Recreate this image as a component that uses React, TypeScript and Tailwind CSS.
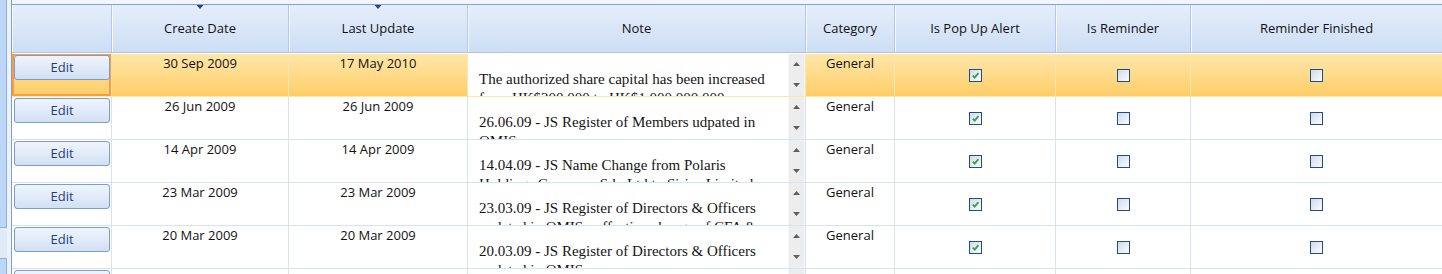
import React from "react";

type Note = {
  created: string;
  updated: string;
  note: string;
  category: string;
  popup: boolean;
  reminder: boolean;
  finished: boolean;
};

const notes: Note[] = [
  {
    created: "30 Sep 2009",
    updated: "17 May 2010",
    note: "The authorized share capital has been increased from HK$200,000 to HK$1,000,000,000",
    category: "General",
    popup: true,
    reminder: false,
    finished: false,
  },
  {
    created: "26 Jun 2009",
    updated: "26 Jun 2009",
    note: "26.06.09 - JS Register of Members udpated in OMIS",
    category: "General",
    popup: true,
    reminder: false,
    finished: false,
  },
  {
    created: "14 Apr 2009",
    updated: "14 Apr 2009",
    note: "14.04.09 - JS Name Change from Polaris Holdings Company Sdn Ltd to Sirius Limited",
    category: "General",
    popup: true,
    reminder: false,
    finished: false,
  },
  {
    created: "23 Mar 2009",
    updated: "23 Mar 2009",
    note: "23.03.09 - JS Register of Directors & Officers updated in OMIS - effective change of CFA & RO",
    category: "General",
    popup: true,
    reminder: false,
    finished: false,
  },
  {
    created: "20 Mar 2009",
    updated: "20 Mar 2009",
    note: "20.03.09 - JS Register of Directors & Officers updated in OMIS",
    category: "General",
    popup: true,
    reminder: false,
    finished: false,
  },
  {
    created: "",
    updated: "",
    note: "",
    category: "",
    popup: false,
    reminder: false,
    finished: false,
  },
];

const cols = "grid grid-cols-[100px_177px_179px_338px_89px_161px_135px_1fr]";

function HeaderCell({ label, sorted }: { label?: string; sorted?: boolean }) {
  return (
    <div className="relative flex items-center justify-center border-r border-[#b3c8e5] shadow-[inset_1px_0_0_#f6f9fe]">
      {sorted && (
        <svg className="absolute left-1/2 top-0 -translate-x-1/2" width="7" height="4" viewBox="0 0 7 4">
          <path d="M0 0 H7 L3.5 4 Z" fill="#26457e" />
        </svg>
      )}
      {label}
    </div>
  );
}

function Check({ on }: { on: boolean }) {
  return (
    <span className="flex h-[13px] w-[13px] items-center justify-center border border-[#1f4e86] bg-linear-to-br from-[#d2dae8] to-[#fbfcfe]">
      {on && (
        <svg width="9" height="9" viewBox="0 0 9 9">
          <path d="M1.8 4.6 L3.7 6.6 L7.4 2.2" fill="none" stroke="#3aa33a" strokeWidth="1.8" />
        </svg>
      )}
    </span>
  );
}

function Scroller() {
  return (
    <div className="flex w-[17px] shrink-0 flex-col items-center justify-between border-x border-[#f7f7f7] bg-[#ededed] pb-[9px] pt-[8px]">
      <svg width="7" height="4" viewBox="0 0 7 4">
        <path d="M3.5 0 L7 4 H0 Z" fill="#5f5f5f" />
      </svg>
      <svg width="7" height="4" viewBox="0 0 7 4">
        <path d="M0 0 H7 L3.5 4 Z" fill="#5f5f5f" />
      </svg>
    </div>
  );
}

function NoteRow({ n, selected }: { n: Note; selected: boolean }) {
  const line = selected ? "border-r border-[#fbe6ae]" : "border-r border-[#d5e2f3]";
  const top = "flex justify-center pt-[1px] leading-[16px]";
  return (
    <div
      className={`${cols} h-[43px] shrink-0 border-b ${
        selected
          ? "border-[#fde9a6] bg-linear-to-b from-[#ffe7a9] to-[#fecd66]"
          : "border-[#d5e2f3] bg-white"
      }`}
    >
      <div className={`${line} ${selected ? "shadow-[inset_0_0_0_2px_#ff9b3d]" : ""}`}>
        <button className="ml-[2px] mt-[1px] flex h-[25px] w-[96px] items-center justify-center rounded-[3px] border border-[#7d9bcb] bg-linear-to-b from-[#eef4fc] via-[#e2ebf8] to-[#d2e0f3] text-[#1b3f85]">
          Edit
        </button>
      </div>
      <div className={`${line} ${top}`}>{n.created}</div>
      <div className={`${line} ${top}`}>{n.updated}</div>
      <div className={`${line} flex overflow-hidden bg-white`}>
        <div className="h-full flex-1 overflow-hidden pl-[11px] pr-[7px] pt-[16px] font-['Liberation_Serif',serif] text-[15px] leading-[19px] text-[#141414]">
          {n.note}
        </div>
        <Scroller />
      </div>
      <div className={`${line} ${top}`}>{n.category}</div>
      <div className={`${line} flex items-center justify-center`}>
        <Check on={n.popup} />
      </div>
      <div className={`${line} flex items-center justify-center`}>
        <Check on={n.reminder} />
      </div>
      <div className="flex items-center justify-center">
        <Check on={n.finished} />
      </div>
    </div>
  );
}

export default function App() {
  return (
    <div className="flex h-[274px] w-[1442px] overflow-hidden bg-white font-['Open_Sans',sans-serif] text-[13px] text-[#111]">
      <div className="flex w-[11px] shrink-0 flex-col bg-[#eef3fb]">
        <div className="h-[228px] w-[7px] border-b border-r border-[#8fb0df] bg-[#bcd6f8]" />
        <div className="h-[30px] w-[7px] bg-[#e1eaf7]" />
        <div className="w-[7px] flex-1 border-r border-t border-[#8fb0df] bg-[#bcd6f8]" />
      </div>
      <div className="flex flex-1 flex-col border-l border-[#7d9fd3]">
        <div className="h-[5px] shrink-0 border-b border-[#7fa4d8] bg-[#f2f6fc]" />
        <div className={`${cols} h-[48px] shrink-0 border-b border-[#b5c5da] bg-linear-to-b from-[#e5eefb] to-[#cddef5] text-[#111]`}>
          <HeaderCell />
          <HeaderCell label="Create Date" sorted />
          <HeaderCell label="Last Update" sorted />
          <HeaderCell label="Note" />
          <HeaderCell label="Category" />
          <HeaderCell label="Is Pop Up Alert" />
          <HeaderCell label="Is Reminder" />
          <div className="flex items-center justify-center shadow-[inset_1px_0_0_#f6f9fe]">Reminder Finished</div>
        </div>
        <div className="h-px shrink-0 bg-white" />
        {notes.map((n, i) => (
          <NoteRow key={i} n={n} selected={i === 0} />
        ))}
      </div>
    </div>
  );
}
